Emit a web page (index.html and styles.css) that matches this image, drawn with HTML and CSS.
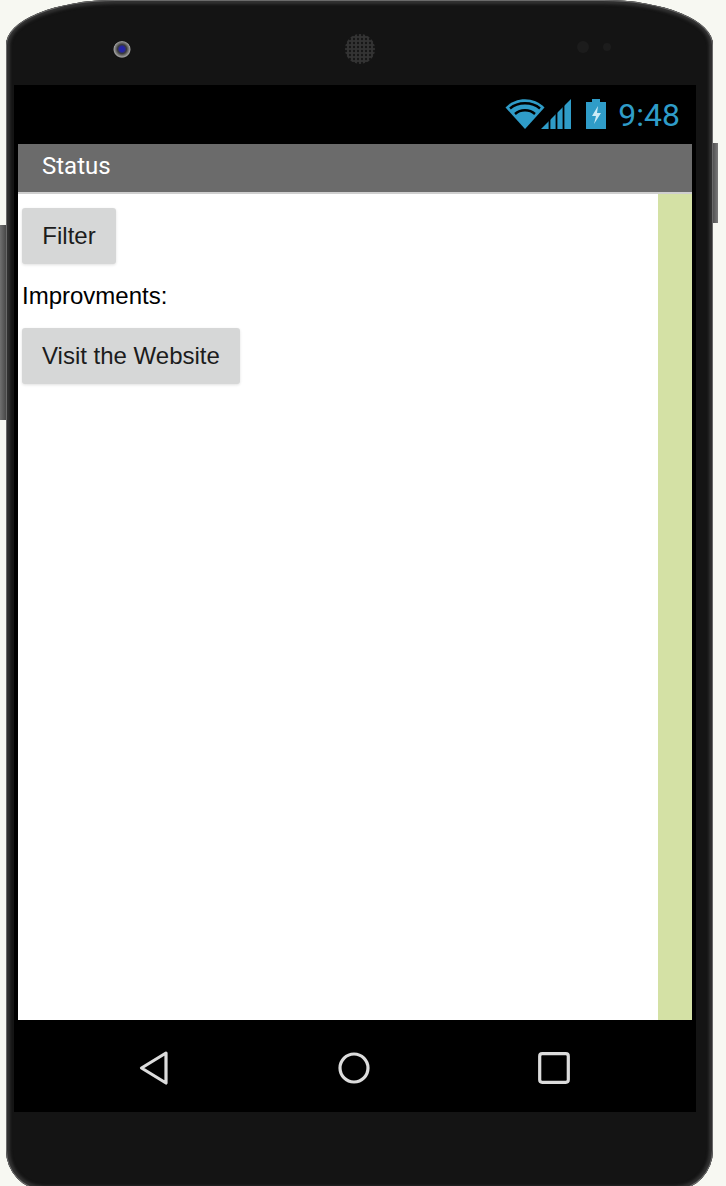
FILE: index.html
```html
<!DOCTYPE html>
<html lang="en">
<head>
  <meta charset="UTF-8">
  <meta name="viewport" content="width=device-width, initial-scale=1.0">
  <title>Status</title>
  <link rel="stylesheet" href="styles.css">
</head>
<body>
  <div class="side-btn side-left"></div>
  <div class="side-btn side-right"></div>
  <div class="phone">
    <div class="bezel-top">
      <div class="camera"></div>
      <svg class="speaker" width="32" height="32" viewBox="0 0 32 32">
        <defs>
          <pattern id="mesh" width="4" height="4" patternUnits="userSpaceOnUse">
            <rect width="4" height="4" fill="#333"/>
            <circle cx="2" cy="2" r="1.200" fill="#161616"/>
          </pattern>
        </defs>
        <circle cx="16" cy="16" r="15" fill="url(#mesh)"/>
      </svg>
      <div class="sensors">
        <span class="sensor"></span>
        <span class="sensor sensor-small"></span>
      </div>
    </div>
    <div class="screen">
      <div class="status-bar">
        <svg class="icon-wifi" width="40" height="32" viewBox="0 0 40 32">
          <path d="M20 31 0.5 9.5C11 -1.5 29 -1.5 39.500 9.5z" fill="#2f9cc8"/>
          <path d="M5 10.500C13 3.500 27 3.500 35 10.500M10 16C15.500 11 24.500 11 30 16" fill="none" stroke="#000" stroke-width="2.400"/>
        </svg>
        <svg class="icon-signal" width="30" height="32" viewBox="0 0 30 32">
          <path d="M0 31 30 1v30z" fill="#2f9cc8"/>
          <path d="M8.500 18v14M15.500 11v21M22.500 4v28" stroke="#000" stroke-width="1.800"/>
        </svg>
        <svg class="icon-battery" width="22" height="32" viewBox="0 0 22 32">
          <path d="M7 1h8v3h6v27H1V4h6z" fill="#2f9cc8"/>
          <path d="M13 8 7 18h4l-2 8 7-11h-4z" fill="#cdeaf5"/>
        </svg>
        <span class="clock">9:48</span>
      </div>
      <div class="app">
        <div class="title-bar">Status</div>
        <div class="content">
          <div class="main-col">
            <button class="btn">Filter</button>
            <div class="label">Improvments:</div>
            <button class="btn">Visit the Website</button>
          </div>
          <div class="side-col"></div>
        </div>
      </div>
      <div class="nav-bar">
        <svg width="30" height="36" viewBox="0 0 30 36">
          <path d="M27 3 2.500 18 27 33z" fill="none" stroke="#dcdcdc" stroke-width="3.200" stroke-linejoin="round"/>
        </svg>
        <svg width="32" height="32" viewBox="0 0 32 32">
          <circle cx="16" cy="16" r="14" fill="none" stroke="#dcdcdc" stroke-width="3.200"/>
        </svg>
        <svg width="32" height="32" viewBox="0 0 32 32">
          <rect x="1.700" y="1.700" width="28.600" height="28.600" rx="2.500" fill="none" stroke="#dcdcdc" stroke-width="3.200"/>
        </svg>
      </div>
    </div>
  </div>
</body>
</html>
```

FILE: styles.css
```css
html, body {
  margin: 0;
  padding: 0;
  height: 1186px;
  overflow: hidden;
}
body {
  background-color: #f7f8f2;
  font-family: "Liberation Sans", Arial, sans-serif;
  position: relative;
}
.phone {
  width: 707px;
  height: 1190px;
  margin-left: 6px;
  padding: 0 17px 0 8px;
  box-sizing: border-box;
  border-radius: 110px 110px 38px 38px / 45px 45px 40px 40px;
  box-shadow: inset 0 0 0 1px #6a6a6a, inset 0 0 3px 4px #333;
  background-color: #141414;
  position: relative;
}
.side-btn {
  position: absolute;
}
.side-left {
  left: 0;
  top: 225px;
  width: 8px;
  height: 195px;
  background: linear-gradient(to right, #707070, #3a3a3a);
}
.side-right {
  left: 712px;
  top: 143px;
  width: 6px;
  height: 80px;
  background: linear-gradient(to right, #4a4a4a, #7a7a7a);
}
.bezel-top {
  height: 85px;
  position: relative;
}
.camera {
  position: absolute;
  left: 99px;
  top: 41px;
  width: 18px;
  height: 18px;
  border-radius: 50%;
  filter: blur(0.7px);
  background: radial-gradient(circle at 50% 45%, #2424a8 0 2.500px, #3a3a3a 4.500px, #a0a0a0 8px, #141414 9px);
}
.speaker {
  position: absolute;
  left: 330px;
  top: 33px;
  filter: blur(0.6px);
}
.sensors {
  position: absolute;
  left: 563px;
  top: 41px;
  display: flex;
  align-items: center;
  gap: 14px;
}
.sensor {
  width: 12px;
  height: 12px;
  border-radius: 50%;
  background-color: #1c1c1c;
}
.sensor-small {
  width: 8px;
  height: 8px;
}
.screen {
  background-color: #000;
  height: 1027px;
  display: flex;
  flex-direction: column;
}
.status-bar {
  height: 59px;
  display: flex;
  align-items: center;
  justify-content: flex-end;
  padding-right: 16px;
  box-sizing: border-box;
  flex-shrink: 0;
}
.status-bar svg {
  filter: blur(0.6px);
}
.icon-wifi {
  margin-right: -4px;
  margin-top: -2px;
}
.icon-signal {
  margin-top: -2px;
  margin-right: 14px;
}
.icon-battery {
  margin-top: -2px;
  margin-right: 11px;
}
.clock {
  font-family: Roboto, sans-serif;
  font-size: 32px;
  color: #2f9cc8;
  line-height: 30px;
}
.app {
  flex: 1;
  margin: 0 4px;
  display: flex;
  flex-direction: column;
  background-color: #fff;
}
.title-bar {
  height: 48px;
  line-height: 45px;
  padding-left: 24px;
  background-color: #6b6b6b;
  border-bottom: 2px solid #cfcfcf;
  color: #fff;
  font-family: Roboto, sans-serif;
  font-size: 24px;
}
.content {
  flex: 1;
  display: flex;
}
.main-col {
  flex: 1;
  display: flex;
  flex-direction: column;
  align-items: flex-start;
  padding: 14px 4px;
}
.side-col {
  width: 34px;
  background-color: #d4e1a5;
}
.btn {
  height: 56px;
  min-width: 94px;
  padding: 0 20px;
  border: none;
  border-radius: 3px;
  background-color: #d6d7d7;
  box-shadow: 0 1px 3px rgba(0, 0, 0, 0.12);
  color: #1c1c1c;
  font-family: "Liberation Sans", Arial, sans-serif;
  font-size: 24px;
}
.label {
  height: 64px;
  line-height: 64px;
  font-size: 24px;
  color: #000;
}
.nav-bar {
  height: 92px;
  box-sizing: border-box;
  flex-shrink: 0;
  display: flex;
  align-items: center;
  justify-content: space-between;
  padding: 4px 126px 0 125px;
}
```
